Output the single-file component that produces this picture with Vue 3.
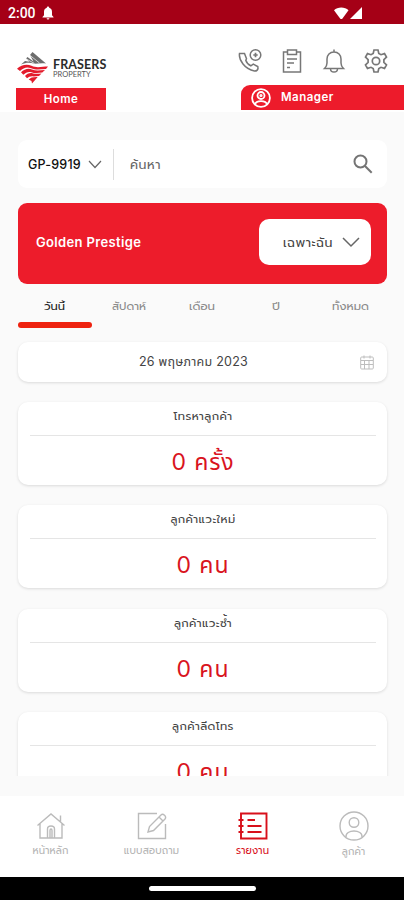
<script setup>
const tabs = [
  { label: 'วันนี้', w: 21 },
  { label: 'สัปดาห์', w: 34 },
  { label: 'เดือน', w: 26 },
  { label: 'ปี', w: 8 },
  { label: 'ทั้งหมด', w: 37 },
]
const stats = [
  { title: 'โทรหาลูกค้า', value: '0 ครั้ง' },
  { title: 'ลูกค้าแวะใหม่', value: '0 คน' },
  { title: 'ลูกค้าแวะซ้ำ', value: '0 คน' },
  { title: 'ลูกค้าลีดโทร', value: '0 คน' },
]
</script>

<template>
  <div class="screen">
    <div class="status">
      <span class="time">2:00</span>
      <svg class="s-bell" width="12" height="14" viewBox="0 0 12 14" fill="#fff"><path d="M6 0.5a1.2 1.2 0 0 1 1.2 1.3C9.2 2.4 10 4 10 6v3.3l1.5 1.6v.7H.5v-.7L2 9.300V6c0-2 .8-3.600 2.800-4.200A1.200 1.200 0 0 1 6 .5zM4.600 12.200h2.800a1.400 1.400 0 0 1-2.800 0z"/></svg>
      <svg class="signal" width="30" height="14" viewBox="0 0 30 14" fill="#fff"><path d="M1 4.200C4.500.500 12 .500 15.500 4.200L9.500 12.500q-1.200 1.200-2.400 0z"/><path d="M29 1v12H17z"/></svg>
    </div>

    <header>
      <div class="brand">
        <div class="logo">
          <svg width="33" height="33" viewBox="0 0 33 33">
            <path fill="#6d6d6d" d="M16.500 1 30 12.500c-4-.5-8 0-11.500.3C13.500 11 10 11.500 5 13.500l4-3.500 4.500.8L10 7.500l1.500-1.500 6 4.500L14 4z"/>
            <path d="M13.500 4l10 8M9.500 7.500l9 5" stroke="#fff" stroke-width=".7"/>
            <g fill="#e31b2b">
              <path d="M1 17.800C5 13.800 11 12.500 15.500 14.800 21 17.500 26 15.500 32 15.500L30 18c-5 .3-10 1.500-15-.7-4-1.800-7.500-.5-11 2.700z"/>
              <path d="M5 21.200c3-3 7.500-4.300 11-2.700 4 1.600 8 .8 13 .5l-2.700 2.600c-4 .5-8 .8-11-.4-3-.9-5.500.3-8 2.500z"/>
              <path d="M9 25c2-2.300 5-3.500 8-2.600 3 .6 5.500.3 8.500.1L23 25c-3 .3-5 .5-7 .3-2 0-3.500.8-5 2z"/>
              <path d="M12.700 28.500c1.800-2 4.500-2.700 9-2.500L16 32.500l-.5-2.500z"/>
            </g>
          </svg>
          <div class="names">
            <div class="n1">FRASERS</div>
            <div class="n2">PROPERTY</div>
          </div>
        </div>
        <div class="home">Home</div>
      </div>
      <div class="right">
        <div class="tools">
          <svg width="26" height="26" viewBox="0 0 26 26"><path d="M2.500 5.500q-.8 5 3.500 10.500t11.500 7c2 .1 3.200-.8 3.500-2.500l-.2-2-4.500-2.300-2.500 1.600c-2.600-1.200-4.200-3-5-5.600L9.500 10.800 7.500 5.500H4.200q-1.300 0-1.700 0z"/><circle cx="18.500" cy="7" r="5.300"/><path d="M18.500 4.800v4.400M16.300 7h4.400" stroke-width="1.700"/></svg>
          <svg width="26" height="26" viewBox="0 0 26 26"><path d="M8.500 4H4.500v20h17V4h-4M8.500 2h9v4.500h-9zM8 11h10M8 15h7M8 19.500h3"/></svg>
          <svg width="26" height="26" viewBox="0 0 26 26"><path d="M3.500 20.500c1.500-1.500 2.500-3 2.500-5.500V11c0-4 2.800-7 7-7s7 3 7 7v4c0 2.500 1 4 2.500 5.500zM13 4V1.500M9.500 20.700c0 4.500 7 4.500 7 0"/></svg>
          <svg width="26" height="26" viewBox="0 0 26 26" class="gear"><path d="M11 2h4l.8 3.500 2.200 1.200 3.500-1.100 2 3.500-2.600 2.500v2.800l2.600 2.500-2 3.500-3.500-1.100-2.200 1.200L15 24h-4l-.8-3.500L8 19.300l-3.500 1.100-2-3.500 2.600-2.500v-2.800L2.500 9.100l2-3.500L8 6.700l2.200-1.200z"/><circle cx="13" cy="13" r="3.700"/></svg>
        </div>
        <div class="manager">
          <svg width="20" height="20" viewBox="0 0 20 20" fill="none" stroke="#fff" stroke-width="1.800"><circle cx="10" cy="10" r="8.900"/><circle cx="10" cy="7.500" r="3.500"/><path d="M4 16.500c1-4.500 11-4.500 12 0"/><circle cx="10" cy="7.500" r=".7"/></svg>
          <span>Manager</span>
        </div>
      </div>
    </header>

    <main>
      <div class="search">
        <span class="code">GP-9919</span>
        <svg class="chev" width="14" height="9" viewBox="0 0 14 9"><path d="M1 1l6 6.500L13 1" /></svg>
        <i></i>
        <span class="find">ค้นหา</span>
        <svg class="mag" width="20" height="20" viewBox="0 0 20 20" fill="none" stroke="#747474" stroke-width="2"><circle cx="7.500" cy="7.500" r="6"/><path d="M12 12l6.700 6.700"/></svg>
      </div>

      <div class="project">
        <span>Golden Prestige</span>
        <div class="select">
          <span>เฉพาะฉัน</span>
          <svg width="18" height="11" viewBox="0 0 18 11"><path d="M1 1l8 8 8-8"/></svg>
        </div>
      </div>

      <div class="tabs">
        <div v-for="(t, i) in tabs" :key="i" class="tab" :class="{ on: i === 0 }">
          <svg :width="t.w" height="24" :viewBox="`0 0 ${t.w} 24`"><text x="0" y="15" :textLength="t.w" lengthAdjust="spacingAndGlyphs">{{ t.label }}</text></svg>
        </div>
      </div>

      <div class="date">
        <span>26 พฤษภาคม 2023</span>
        <svg width="14" height="15" viewBox="0 0 14 15" fill="none" stroke="#bdbdbd"><rect x=".7" y="2" width="12.600" height="12" rx="1"/><path d="M1 5.500h12M4 .5v3M10 .5v3M4.500 6v8M9 6v8M1 9.500h12"/></svg>
      </div>

      <div class="stats">
        <div v-for="s in stats" :key="s.title" class="card">
          <div class="title">{{ s.title }}</div>
          <div class="value">{{ s.value }}</div>
        </div>
      </div>
    </main>

    <nav>
      <div class="item">
        <svg width="30" height="30" viewBox="0 0 30 30"><path d="M1.500 14.500L15 3l13.500 11.500M4 12.500V27h22V12.500M11.500 27v-9c0-4 7-4 7 0v9M14 27v-7.500c0-2 2-2 2 0V27M24.500 4.500V11"/></svg>
        <span>หน้าหลัก</span>
      </div>
      <div class="item">
        <svg width="30" height="30" viewBox="0 0 30 30"><path d="M20 2.500H1.500v25h27V13M11 21l1.500-5.500L24 4c2-2 6 1.500 4 4L16.500 19.500zM22 6l4 4"/></svg>
        <span>แบบสอบถาม</span>
      </div>
      <div class="item active">
        <svg width="30" height="30" viewBox="0 0 30 30"><path d="M3 2.500h25.500v25H3zM.5 9h5M.5 15h5M.5 21h5"/><path d="M9.500 9H17M9.500 15h14M9.500 21h14"/></svg>
        <span>รายงาน</span>
      </div>
      <div class="item">
        <svg width="30" height="30" viewBox="0 0 30 30"><circle cx="15" cy="15" r="14"/><circle cx="15" cy="11.500" r="4.800"/><path d="M7 26c-1-8 17-8 16 0"/></svg>
        <span class="low">ลูกค้า</span>
      </div>
    </nav>
    <div class="gesture"><i></i></div>
  </div>
</template>

<style>
body { background: #fafafa; overflow: hidden; }
</style>
<style scoped>
* { box-sizing: border-box; }
.screen { width: 404px; height: 900px; display: flex; flex-direction: column; background: #fafafa; font-family: Prompt, Kanit, "Noto Sans Thai", Inter, sans-serif; color: #333; overflow: hidden; }
svg { flex: none; display: block; }
.status { height: 24px; background: #a50016; display: flex; align-items: center; padding: 2px 41px 0 8px; flex: none; }
.time { font: 500 14px Roboto, sans-serif; color: #fff; width: 27px; }
.s-bell { margin-left: 7px; }
.signal { margin-left: auto; margin-top: -1px; }
header { height: 88px; flex: none; background: #fff; display: flex; justify-content: space-between; }
.brand { padding: 27px 0 0 16px; width: 110px; }
.logo { display: flex; height: 37px; }
.names { padding: 6px 0 0 4px; white-space: nowrap; }
.n1 { font: 700 12.500px/15px Lato, sans-serif; color: #2b2b2b; letter-spacing: .1px; }
.n2 { font: 7.500px/10px Lato, sans-serif; color: #555; margin-top: -2px; }
.home { width: 90px; height: 22px; background: #ed1b2b; color: #fff; text-align: center; font: 600 11.500px/23px Inter, sans-serif; letter-spacing: .5px; }
.right { width: 163px; display: flex; flex-direction: column; }
.tools { height: 61px; padding: 24px 15px 0 0; margin-left: -4px; display: flex; justify-content: space-between; }
.tools svg { fill: none; stroke: #777; stroke-width: 1.500; }
.tools .gear { stroke-width: 1.700; }
.manager { height: 25px; background: #ed1b2b; border-top-left-radius: 9px; display: flex; align-items: center; padding-left: 10px; gap: 10px; color: #fff; font: 600 11.500px Inter, sans-serif; letter-spacing: .5px; }
.manager span { margin-top: -2px; }
main { height: 684px; padding: 28px 17px 0 18px; flex: none; }
.search { height: 48px; background: #fff; border-radius: 9px; display: flex; align-items: center; padding: 0 14px 0 10px; }
.code { font: 500 12.500px Inter, sans-serif; color: #111; width: 54px; white-space: nowrap; letter-spacing: .2px; }
.chev { margin-left: 6px; fill: none; stroke: #666; stroke-width: 1.200; }
.search i { width: 1px; height: 31px; background: #ddd; margin: 0 16px 0 11px; }
.find { font-size: 12.500px; letter-spacing: .6px; color: #666; }
.mag { margin-left: auto; }
.project { height: 81px; margin-top: 14.500px; background: #ed1c2b; border-radius: 9px; display: flex; align-items: center; justify-content: space-between; padding: 0 16px 2px 18px; color: #fff; font: 600 13px Inter, sans-serif; letter-spacing: .35px; }
.select { width: 112px; height: 46px; background: #fff; border-radius: 10px; display: flex; align-items: center; justify-content: flex-end; gap: 9px; padding-right: 11px; color: #444; font: 12.500px Prompt, "Noto Sans Thai", sans-serif; letter-spacing: .6px; }
.select svg { fill: none; stroke: #666; stroke-width: 1.500; }
.tabs { height: 45px; display: flex; }
.tab { flex: 1; height: 45px; padding-top: 11px; display: flex; flex-direction: column; align-items: center; }
.tab text { font-size: 10.500px; fill: #8a8a8a; }
.on text { fill: #222; }
.tab svg { overflow: visible; }
.on::after { content: ""; width: 100%; height: 6px; margin-top: 3px; border-radius: 3px; background: #ee220f; }
.date, .card { background: #fff; border-radius: 10px; box-shadow: 0 1px 3px rgba(0,0,0,.13); }
.date { height: 40px; margin-top: 13.500px; display: flex; align-items: center; justify-content: flex-end; padding-right: 13px; }
.date span { flex: 1; text-align: center; padding-left: 9px; font: 12.500px Inter, "Noto Sans Thai", sans-serif; color: #444; letter-spacing: .25px; padding-top: 1px; }
.stats { height: 394px; overflow: hidden; margin: 0 -4px; padding: 20px 4px 0; display: flex; flex-direction: column; gap: 20.300px; }
.card { flex: none; height: 83px; padding: 0 11px 0 12px; text-align: center; }
.title { height: 34px; border-bottom: 1px solid #e5e5e5; font-size: 11.500px; letter-spacing: .4px; line-height: 29px; color: #444; }
.value { color: #d9141e; font: 23px/53px Inter, "Noto Sans Thai", sans-serif; letter-spacing: .9px; }
nav { height: 81px; flex: none; background: #fff; display: grid; grid-template-columns: repeat(4, 101px); }
.item { display: flex; flex-direction: column; align-items: center; padding-top: 15px; font-size: 10px; line-height: 19px; color: #b5b5b5; letter-spacing: .15px; }
.low { padding-top: 1px; }
.item svg { fill: none; stroke: #bbb; stroke-width: 1.400; }
.item.active { color: #d8101b; }
.item.active svg { stroke: #d8101b; stroke-width: 1.900; }
.gesture { height: 23px; background: #000; flex: none; display: flex; justify-content: center; padding-top: 9px; }
.gesture i { width: 107px; height: 5px; border-radius: 3px; background: #fff; }
</style>
